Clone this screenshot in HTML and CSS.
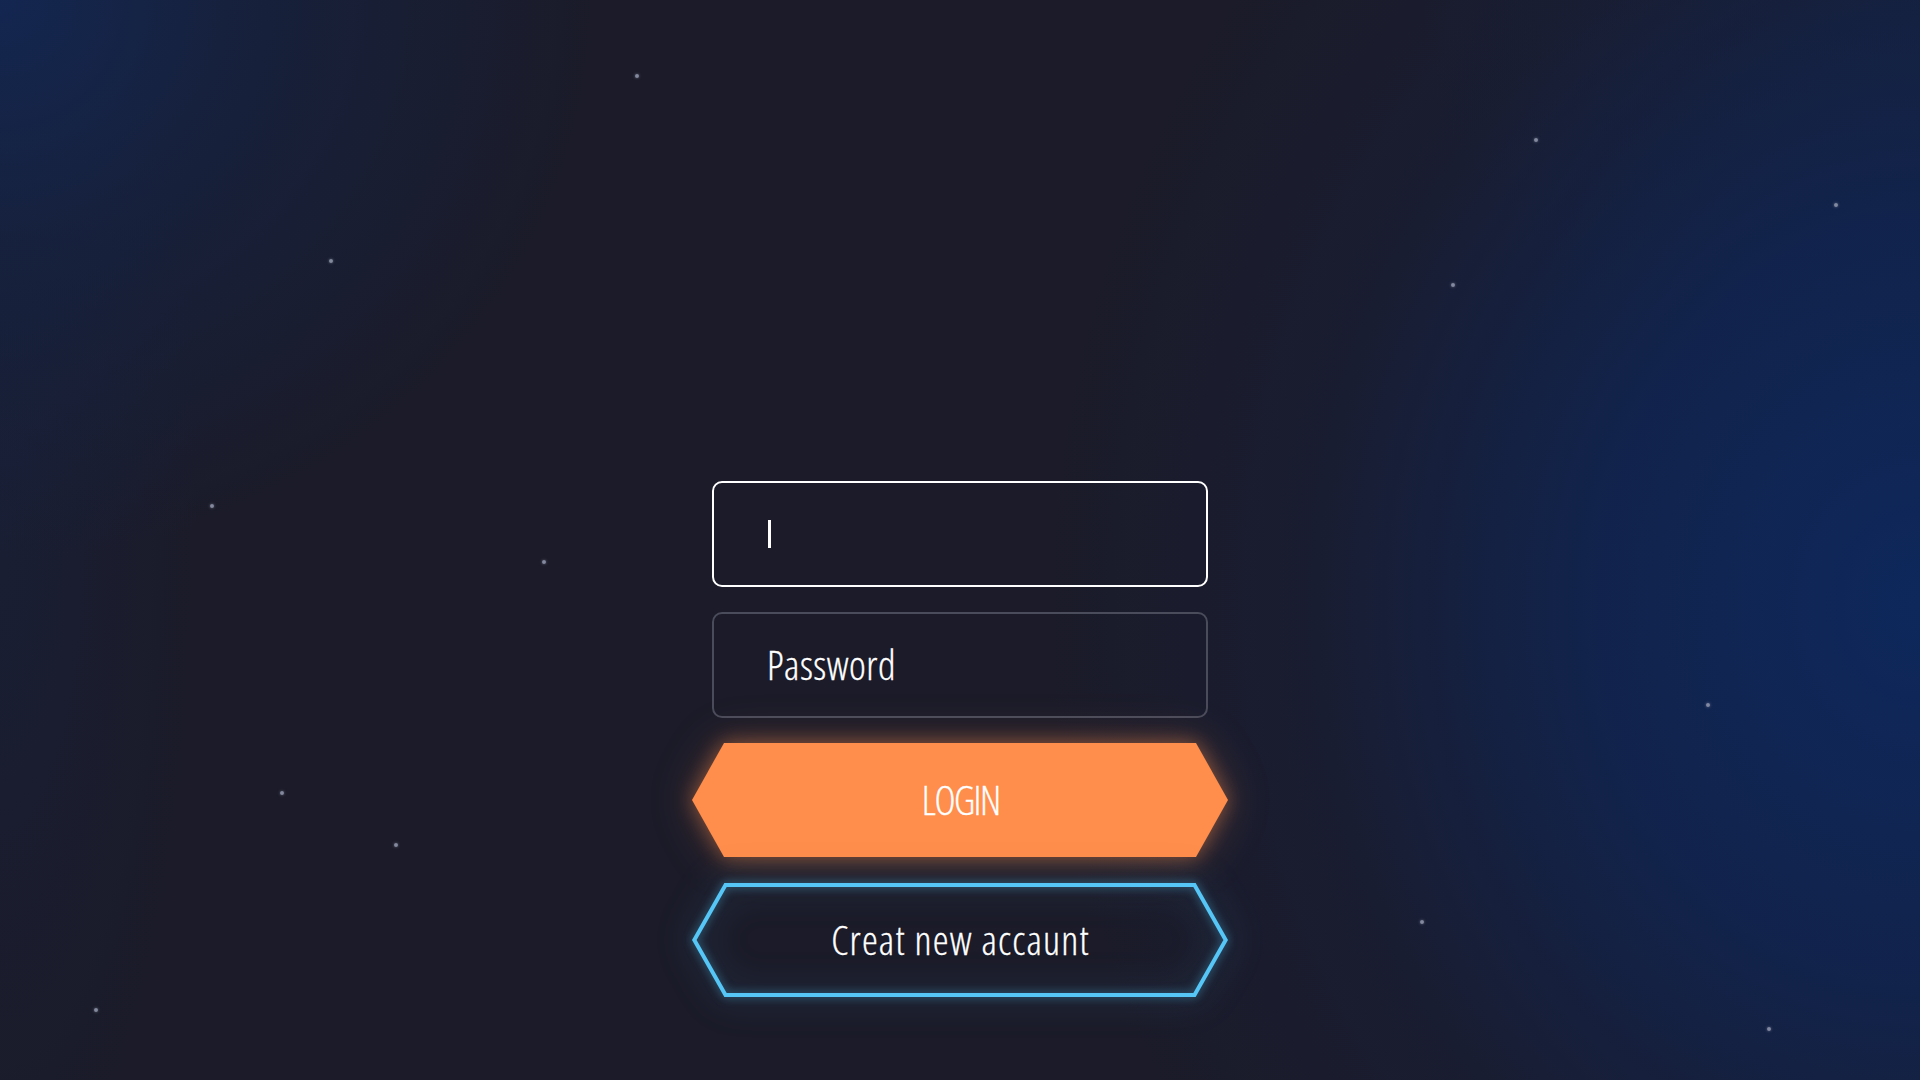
FILE: index.html
```html
<!DOCTYPE html>
<html lang="en">
<head>
<meta charset="utf-8">
<title>Login</title>
<link rel="stylesheet" href="styles.css">
</head>
<body>
<div class="sky">
  <span class="star" style="left:637px;top:76px"></span>
  <span class="star" style="left:331px;top:261px"></span>
  <span class="star" style="left:212px;top:506px"></span>
  <span class="star" style="left:544px;top:562px"></span>
  <span class="star" style="left:282px;top:793px"></span>
  <span class="star" style="left:396px;top:845px"></span>
  <span class="star" style="left:96px;top:1010px"></span>
  <span class="star" style="left:1536px;top:140px"></span>
  <span class="star" style="left:1836px;top:205px"></span>
  <span class="star" style="left:1453px;top:285px"></span>
  <span class="star" style="left:1708px;top:705px"></span>
  <span class="star" style="left:1422px;top:922px"></span>
  <span class="star" style="left:1769px;top:1029px"></span>
</div>
<main class="login">
  <div class="field field-active"><span class="caret"></span></div>
  <div class="field"><span class="placeholder">Password</span></div>
  <button class="hex-btn hex-primary" type="button">
    <svg class="hex-shape" viewBox="0 0 536 114" preserveAspectRatio="none" aria-hidden="true">
      <polygon points="32,0 504,0 536,57 504,114 32,114 0,57" fill="#ff8d4b"/>
    </svg>
    <span class="hex-label label-login">LOGIN</span>
  </button>
  <button class="hex-btn hex-outline" type="button">
    <svg class="hex-shape" viewBox="0 0 536 114" preserveAspectRatio="none" aria-hidden="true">
      <polygon points="33.5,2 502.5,2 533.7,57 502.5,112 33.5,112 2.3,57" fill="none" stroke="#55c6f6" stroke-width="4"/>
    </svg>
    <span class="hex-label label-create">Creat new accaunt</span>
  </button>
</main>
</body>
</html>
```
FILE: styles.css
```css
html, body {
  margin: 0;
  padding: 0;
  width: 1920px;
  height: 1080px;
  overflow: hidden;
}

body {
  position: relative;
  font-family: "Open Sans", "Roboto Condensed", sans-serif;
  font-stretch: 75%;
  font-weight: 300;
  color: #ffffff;
  background-color: #1b1b29;
  background-image:
    radial-gradient(ellipse 600px 560px at 0 0, rgba(19, 39, 82, 0.95) 0%, rgba(19, 36, 72, 0.55) 45%, rgba(27, 27, 41, 0) 100%),
    radial-gradient(ellipse 200px 700px at 0 50%, rgba(22, 36, 70, 0.35) 0%, rgba(27, 27, 41, 0) 100%),
    radial-gradient(ellipse 880px 1000px at 100% 56%, rgba(14, 40, 92, 1) 0%, rgba(15, 37, 84, 0.8) 38%, rgba(22, 32, 62, 0.35) 70%, rgba(27, 27, 41, 0) 100%),
    radial-gradient(ellipse 500px 400px at 100% 0, rgba(20, 34, 66, 0.6) 0%, rgba(27, 27, 41, 0) 100%);
}

.sky {
  position: absolute;
  inset: 0;
  pointer-events: none;
}

.star {
  position: absolute;
  width: 4px;
  height: 4px;
  margin: -2px 0 0 -2px;
  border-radius: 50%;
  background: rgba(150, 156, 178, 0.85);
  box-shadow: 0 0 3px rgba(150, 156, 178, 0.6);
}

.login {
  position: relative;
  display: flex;
  flex-direction: column;
  align-items: center;
  padding-top: 481px;
}

.field {
  box-sizing: border-box;
  width: 496px;
  height: 106px;
  border: 2px solid #4a4b5b;
  border-radius: 10px;
  display: flex;
  align-items: center;
  padding-left: 54px;
  margin-bottom: 25px;
}

.field-active {
  border-color: #ffffff;
}

.caret {
  display: block;
  width: 3px;
  height: 28px;
  background: #ffffff;
}

.placeholder {
  font-size: 40px;
  line-height: 1;
  margin-left: -1px;
  letter-spacing: 0.5px;
  color: #ffffff;
  -webkit-text-stroke: 0.3px #ffffff;
}

.hex-btn {
  position: relative;
  box-sizing: border-box;
  width: 536px;
  height: 114px;
  padding: 0;
  border: 0;
  background: transparent;
  color: #ffffff;
  font-family: inherit;
  font-stretch: 75%;
  font-weight: 300;
  font-size: 40px;
  line-height: 1;
  display: flex;
  align-items: center;
  justify-content: center;
  cursor: pointer;
}

.hex-primary {
  margin-bottom: 26px;
}

.hex-shape {
  position: absolute;
  inset: 0;
  width: 100%;
  height: 100%;
  overflow: visible;
}

.hex-primary .hex-shape {
  filter: drop-shadow(0 0 10px rgba(255, 141, 75, 0.45)) drop-shadow(0 0 22px rgba(255, 141, 75, 0.2));
}

.hex-outline .hex-shape {
  filter: drop-shadow(0 0 5px rgba(85, 198, 246, 0.55)) drop-shadow(0 0 18px rgba(85, 198, 246, 0.3));
}

.hex-label {
  position: relative;
  -webkit-text-stroke: 0.3px #ffffff;
}

.label-login {
  letter-spacing: -1.5px;
  margin-right: -1.5px;
}

.label-create {
  letter-spacing: 1.2px;
  margin-right: -1.2px;
}
```
